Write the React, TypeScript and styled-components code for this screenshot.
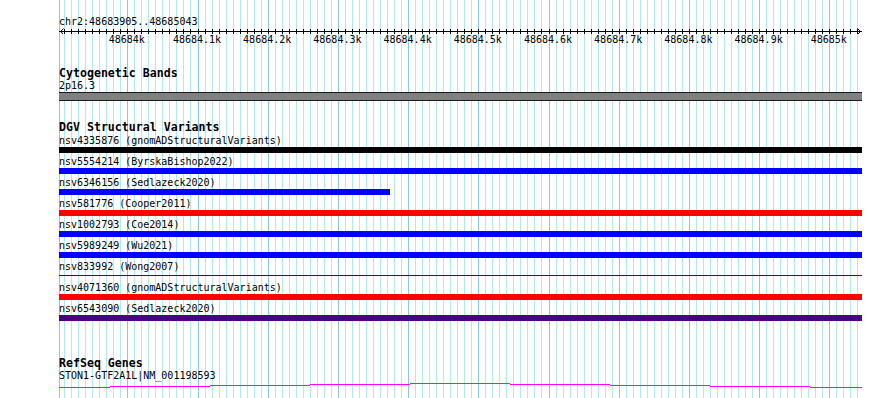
import React from "react";
import styled, { createGlobalStyle } from "styled-components";

const GRID_WIDTH = 803;
const MAJOR0 = 68.3; // x of 48684k relative to grid left
const MAJOR_STEP = 70.2;
const MINOR_STEP = 7.02;

const GlobalStyle = createGlobalStyle`
  html, body { margin: 0; padding: 0; background: #ffffff; }
  body { font-family: "DejaVu Sans Mono", "Liberation Mono", monospace; color: #000; }
`;

const Page = styled.div`
  width: 890px;
  height: 398px;
  overflow: hidden;
  display: flex;
  background: #ffffff;
`;

const Gutter = styled.div`
  width: 59px;
  flex: none;
`;

const Main = styled.div`
  position: relative;
  width: ${GRID_WIDTH}px;
  height: 398px;
  flex: none;
`;

const RightPad = styled.div`
  flex: 1;
`;

const GridLayer = styled.svg`
  position: absolute;
  left: 0;
  top: 0;
  z-index: 0;
  display: block;
`;

const Content = styled.div`
  position: relative;
  z-index: 1;
  display: flex;
  flex-direction: column;
`;

const RulerBlock = styled.div`
  display: flex;
  flex-direction: column;
  padding-top: 16px;
`;

const LocLabel = styled.div`
  font-size: 10px;
  line-height: 11px;
  height: 11px;
  white-space: pre;
`;

const Axis = styled.svg`
  display: block;
  width: ${GRID_WIDTH}px;
  height: 7px;
`;

const TickLabels = styled.div`
  position: relative;
  height: 11px;
`;

const TickLabel = styled.span`
  position: absolute;
  top: 0;
  font-size: 10px;
  line-height: 11px;
  white-space: pre;
  transform: translateX(-50%);
`;

const TrackTitle = styled.div<{ $top: number; $bottom?: number }>`
  font-size: 11.6px;
  font-weight: bold;
  line-height: 13px;
  height: 13px;
  white-space: pre;
  margin-top: ${(p) => p.$top}px;
  margin-bottom: ${(p) => p.$bottom ?? 0}px;
`;

const BandLabel = styled.div`
  font-size: 10px;
  line-height: 11px;
  height: 11px;
  white-space: pre;
`;

const BandBar = styled.div`
  margin-top: 1px;
  height: 7px;
  width: ${GRID_WIDTH}px;
  background: #808080;
  border-top: 1px solid #1a1a1a;
  border-bottom: 1px solid #1a1a1a;
`;

const FeatureRow = styled.div`
  display: flex;
  flex-direction: column;
  margin-bottom: 3px;
`;

const FeatureLabel = styled.div`
  font-size: 10px;
  line-height: 12px;
  height: 12px;
  white-space: pre;
`;

const BarSlot = styled.div`
  height: 6px;
  display: flex;
  flex-direction: column;
`;

const Bar = styled.div<{ $color: string; $thin?: boolean }>`
  background: ${(p) => p.$color};
  height: ${(p) => (p.$thin ? 1 : 6)}px;
  margin-top: ${(p) => (p.$thin ? 2 : 0)}px;
`;

const GeneLabel = styled.div`
  font-size: 10px;
  line-height: 12px;
  height: 12px;
  white-space: pre;
`;

const GeneGlyph = styled.svg`
  display: block;
  width: ${GRID_WIDTH}px;
  height: 8px;
`;

type Variant = {
  name: string;
  src: string;
  color: string;
  width?: number;
  thin?: boolean;
};

const variants: Variant[] = [
  { name: "nsv4335876", src: "gnomADStructuralVariants", color: "#000000" },
  { name: "nsv5554214", src: "ByrskaBishop2022", color: "#0000ff" },
  { name: "nsv6346156", src: "Sedlazeck2020", color: "#0000ff", width: 331 },
  { name: "nsv581776", src: "Cooper2011", color: "#ff0000" },
  { name: "nsv1002793", src: "Coe2014", color: "#0000ff" },
  { name: "nsv5989249", src: "Wu2021", color: "#0000ff" },
  { name: "nsv833992", src: "Wong2007", color: "#0000ff", thin: true },
  { name: "nsv4071360", src: "gnomADStructuralVariants", color: "#ff0000" },
  { name: "nsv6543090", src: "Sedlazeck2020", color: "#4b0082" },
];

const majorLabels = [
  "48684k",
  "48684.1k",
  "48684.2k",
  "48684.3k",
  "48684.4k",
  "48684.5k",
  "48684.6k",
  "48684.7k",
  "48684.8k",
  "48684.9k",
  "48685k",
];

type Line = { x: number; major: boolean };

const lines: Line[] = (() => {
  const out: Line[] = [{ x: 0, major: true }];
  for (let j = -9; j <= 104; j++) {
    const x = Math.round(MAJOR0 + MINOR_STEP * j);
    if (x <= 0 || x >= GRID_WIDTH) continue;
    out.push({ x, major: j % 10 === 0 });
  }
  return out;
})();

const geneSegments = [
  { x0: 0, x1: 51, y: 5 },
  { x0: 51, x1: 151, y: 4 },
  { x0: 151, x1: 251, y: 3 },
  { x0: 251, x1: 351, y: 2 },
  { x0: 351, x1: 451, y: 1 },
  { x0: 451, x1: 551, y: 2 },
  { x0: 551, x1: 651, y: 3 },
  { x0: 651, x1: 751, y: 4 },
  { x0: 751, x1: 803, y: 5 },
];

const genePath = geneSegments
  .map((s) => `M${s.x0} ${s.y + 0.5} H${s.x1}`)
  .join(" ");

function Grid() {
  return (
    <GridLayer width={GRID_WIDTH} height={398} shapeRendering="crispEdges">
      {lines
        .filter((l) => !l.major)
        .map((l) => (
          <rect key={`m${l.x}`} x={l.x} y={0} width={1} height={398} fill="#aeeaee" />
        ))}
      {lines
        .filter((l) => l.major)
        .map((l) => (
          <rect key={`M${l.x}`} x={l.x} y={0} width={1} height={398} fill="#87c6f2" />
        ))}
    </GridLayer>
  );
}

function Ruler() {
  return (
    <RulerBlock>
      <LocLabel>chr2:48683905..48685043</LocLabel>
      <Axis viewBox={`0 0 ${GRID_WIDTH} 7`} shapeRendering="crispEdges">
        <rect x={0} y={4} width={GRID_WIDTH} height={1} fill="#000" />
        {lines
          .filter((l) => l.x > 3 && l.x < GRID_WIDTH - 4)
          .map((l) => (
            <rect key={l.x} x={l.x} y={2} width={1} height={5} fill="#000" />
          ))}
        <path d="M4.5 1.5 L1.5 4.5 L4.5 7.5" stroke="#000" strokeWidth={1} fill="none" shapeRendering="auto" />
        <path
          d={`M${GRID_WIDTH - 4.5} 1.5 L${GRID_WIDTH - 1.5} 4.5 L${GRID_WIDTH - 4.5} 7.5`}
          stroke="#000"
          strokeWidth={1}
          fill="none"
          shapeRendering="auto"
        />
      </Axis>
      <TickLabels>
        {majorLabels.map((t, i) => (
          <TickLabel key={t} style={{ left: MAJOR0 + MAJOR_STEP * i - 0.5 }}>
            {t}
          </TickLabel>
        ))}
      </TickLabels>
    </RulerBlock>
  );
}

export default function App() {
  return (
    <>
      <GlobalStyle />
      <Page>
        <Gutter />
        <Main>
          <Grid />
          <Content>
            <Ruler />
            <TrackTitle $top={22}>Cytogenetic Bands</TrackTitle>
            <BandLabel>2p16.3</BandLabel>
            <BandBar />
            <TrackTitle $top={20} $bottom={1}>
              DGV Structural Variants
            </TrackTitle>
            {variants.map((v) => (
              <FeatureRow key={v.name}>
                <FeatureLabel>{`${v.name} (${v.src})`}</FeatureLabel>
                <BarSlot>
                  <Bar
                    $color={v.color}
                    $thin={v.thin}
                    style={{ width: v.width ?? GRID_WIDTH }}
                  />
                </BarSlot>
              </FeatureRow>
            ))}
            <TrackTitle $top={33}>RefSeq Genes</TrackTitle>
            <GeneLabel>STON1-GTF2A1L|NM_001198593</GeneLabel>
            <GeneGlyph viewBox={`0 0 ${GRID_WIDTH} 8`}>
              <path d={genePath} stroke="#ff00ff" strokeWidth={1} fill="none" shapeRendering="crispEdges" />
            </GeneGlyph>
          </Content>
        </Main>
        <RightPad />
      </Page>
    </>
  );
}
